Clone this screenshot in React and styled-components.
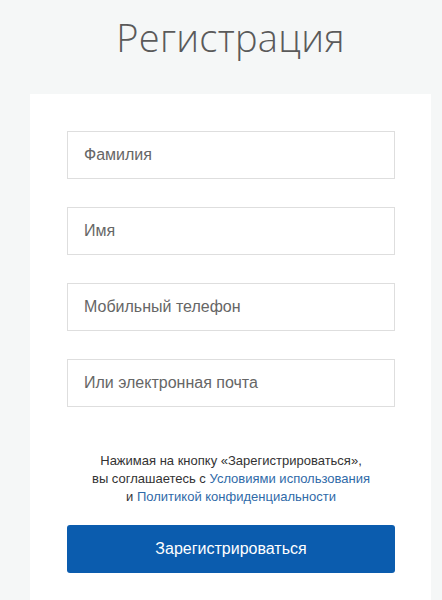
import React from "react";
import styled, { createGlobalStyle } from "styled-components";

const Global = createGlobalStyle`
  html, body { margin: 0; padding: 0; background: #f5f7f7; }
  body { font-family: "Liberation Sans", Arial, sans-serif; }
`;

const Page = styled.div`
  width: 442px;
  min-height: 600px;
  background: #f5f7f7;
  overflow: hidden;
`;

const Title = styled.h1`
  margin: 0;
  padding: 12px 0 0 0;
  width: 401px;
  margin-left: 30px;
  text-align: center;
  font-family: "Open Sans", sans-serif;
  font-weight: 300;
  font-size: 38px;
  line-height: 50px;
  color: #5a5a5a;
  letter-spacing: 0.3px;
`;

const Card = styled.div`
  margin: 32px 0 0 30px;
  width: 401px;
  box-sizing: border-box;
  background: #fff;
  padding: 37px 36px 40px 37px;
  display: flex;
  flex-direction: column;
`;

const Fields = styled.div`
  display: flex;
  flex-direction: column;
  gap: 28px;
`;

const Field = styled.div`
  height: 48px;
  box-sizing: border-box;
  border: 1px solid #dedede;
  display: flex;
  align-items: center;
  padding-left: 16px;
  font-size: 16px;
  color: #666;
`;

const Legal = styled.p`
  margin: 45px 0 0 0;
  text-align: center;
  font-size: 13px;
  line-height: 18px;
  color: #333;
`;

const Link = styled.a`
  color: #2f6aa8;
  text-decoration: none;
`;

const Button = styled.button`
  margin-top: 19px;
  height: 48px;
  border: none;
  border-radius: 3px;
  background: #0b5cae;
  color: #fff;
  font-family: "Liberation Sans", Arial, sans-serif;
  font-size: 16px;
  cursor: pointer;
`;

export default function App() {
  return (
    <Page>
      <Global />
      <Title>Регистрация</Title>
      <Card>
        <Fields>
          <Field>Фамилия</Field>
          <Field>Имя</Field>
          <Field>Мобильный телефон</Field>
          <Field>Или электронная почта</Field>
        </Fields>
        <Legal>
          Нажимая на кнопку «Зарегистрироваться»,
          <br />
          вы соглашаетесь с <Link href="#">Условиями использования</Link>
          <br />
          и <Link href="#">Политикой конфиденциальности</Link>
        </Legal>
        <Button>Зарегистрироваться</Button>
      </Card>
    </Page>
  );
}
